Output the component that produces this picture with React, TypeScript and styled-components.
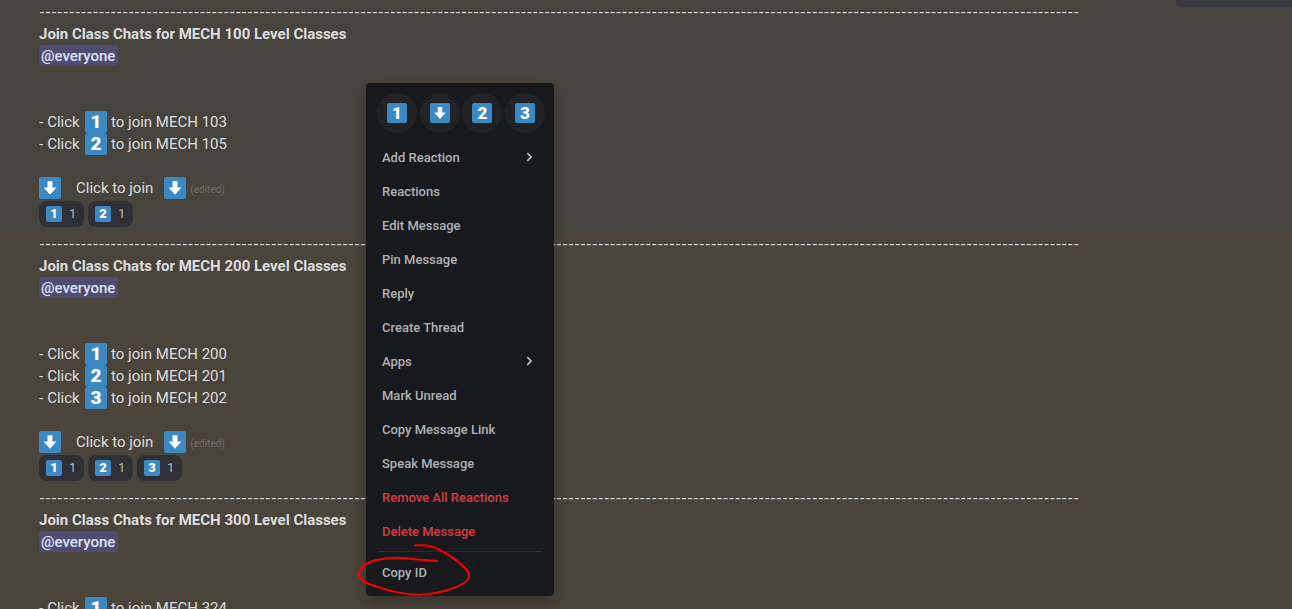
import React from 'react';
import styled, { createGlobalStyle } from 'styled-components';

type EmojiName = '1' | '2' | '3' | 'down';

const GlobalStyle = createGlobalStyle`
  *, *::before, *::after { box-sizing: border-box; }
  body {
    margin: 0;
    overflow: hidden;
    background: #4b443b;
    color: #dcddde;
    font-family: Roboto, "Liberation Sans", sans-serif;
    font-size: 15px;
    line-height: 22px;
  }
`;

const Page = styled.div`
  position: relative;
  height: 100vh;
  overflow: hidden;
`;

const Log = styled.main`
  margin-top: -1px;
`;

const Message = styled.article<{ $tinted?: boolean }>`
  padding: 2px 16px 2px 39px;
  background: ${(p) => (p.$tinted ? '#46443c' : '#4b443b')};
`;

const Rule = styled.div`
  height: 22px;
  overflow: hidden;
  font-family: Lato, sans-serif;
  font-size: 16px;
  line-height: 20px;
  white-space: nowrap;
`;

const Title = styled.h2`
  margin: 0;
  font-size: 15px;
  font-weight: 700;
  line-height: 22px;
`;

const MentionLine = styled.div`
  height: 22px;
  margin-bottom: 44px;
`;

const Mention = styled.span`
  display: inline-block;
  height: 21px;
  padding: 0 3px 0 2px;
  border-radius: 3px;
  background: #4e4c70;
  color: #dee0fc;
  font-weight: 500;
  line-height: 22px;
  vertical-align: top;
`;

const Line = styled.div`
  display: flex;
  height: 22px;
  white-space: nowrap;
`;

const Lead = styled.span`
  display: flex;
  gap: 4px;
  width: 46px;
`;

const Tail = styled.span`
  padding-left: 4px;
`;

const JoinLine = styled(Line)`
  margin-top: 22px;
`;

const JoinText = styled.span`
  padding: 0 11px 0 15px;
`;

const Edited = styled.span`
  padding: 2px 0 0 4px;
  color: #706d69;
  font-size: 10px;
`;

const EmojiTile = styled.span<{ $size: number }>`
  display: inline-flex;
  flex: none;
  align-items: center;
  justify-content: center;
  width: ${(p) => p.$size}px;
  height: ${(p) => p.$size}px;
  border-radius: 2px;
  background: #3b88c3;
  color: #fff;
  font-size: ${(p) => p.$size - 3}px;
  font-weight: 900;
  line-height: ${(p) => p.$size}px;
`;

const Reactions = styled.div`
  display: flex;
  gap: 4px;
  margin: 2px 0;
`;

const Reaction = styled.button`
  display: flex;
  align-items: center;
  gap: 7px;
  width: 45px;
  height: 26px;
  padding: 0 7px;
  border: 0;
  border-radius: 8px;
  background: #2f3036;
  color: #b4b7bb;
  font: 400 13px/26px Roboto, sans-serif;
`;

const CornerPanel = styled.div`
  position: absolute;
  top: 0;
  right: 0;
  width: 116px;
  height: 7px;
  border-radius: 0 0 0 5px;
  background: #373942;
`;

const Menu = styled.div`
  position: absolute;
  top: 83px;
  left: 366px;
  width: 188px;
  padding: 10px 8px 6px;
  border-radius: 4px;
  background: #18191c;
  box-shadow: 0 8px 16px rgba(0, 0, 0, 0.24);
`;

const QuickRow = styled.div`
  display: flex;
  justify-content: space-between;
  margin-bottom: 8px;
  padding: 0 1px 0 3px;
`;

const QuickButton = styled.button`
  display: flex;
  align-items: center;
  justify-content: center;
  width: 40px;
  height: 40px;
  padding: 0;
  border: 0;
  border-radius: 50%;
  background: #202225;
  font-family: inherit;
`;

const MenuItem = styled.button<{ $danger?: boolean }>`
  display: flex;
  align-items: center;
  justify-content: space-between;
  width: 100%;
  height: 32px;
  margin: 2px 0;
  padding: 2px 12px 0 8px;
  border: 0;
  border-radius: 2px;
  background: none;
  color: ${(p) => (p.$danger ? '#d63c40' : '#b0b2b5')};
  font: 500 13px/18px Roboto, sans-serif;
  text-align: left;
`;

const Separator = styled.hr`
  height: 1px;
  margin: 4px;
  border: 0;
  background: #2a2b2f;
`;

const Circled = styled.div`
  position: relative;
`;

const Scribble = styled.svg`
  position: absolute;
  top: -14px;
  left: -18px;
  pointer-events: none;
`;

function Emoji({ name, size }: { name: EmojiName; size: number }) {
  return (
    <EmojiTile $size={size}>
      {name === 'down' ? (
        <svg width={size} height={size} viewBox="0 0 36 36" aria-label="down arrow">
          <path d="M14 7h8v10h6.400L18 29 7.600 17H14z" fill="#fff" />
        </svg>
      ) : (
        name
      )}
    </EmojiTile>
  );
}

function Chevron() {
  return (
    <svg width="10" height="12" viewBox="0 0 10 12" fill="none" aria-hidden="true">
      <path d="M3.3 1.2 7.1 5 3.3 8.8" stroke="#b9bbbe" strokeWidth="1.7" />
    </svg>
  );
}

type Choice = { emoji: EmojiName; course: string };

const posts: { level: string; choices: Choice[] }[] = [
  {
    level: '100',
    choices: [
      { emoji: '1', course: '103' },
      { emoji: '2', course: '105' },
    ],
  },
  {
    level: '200',
    choices: [
      { emoji: '1', course: '200' },
      { emoji: '2', course: '201' },
      { emoji: '3', course: '202' },
    ],
  },
  { level: '300', choices: [{ emoji: '1', course: '324' }] },
];

const quick: EmojiName[] = ['1', 'down', '2', '3'];

const items: { label: string; submenu?: boolean; danger?: boolean }[] = [
  { label: 'Add Reaction', submenu: true },
  { label: 'Reactions' },
  { label: 'Edit Message' },
  { label: 'Pin Message' },
  { label: 'Reply' },
  { label: 'Create Thread' },
  { label: 'Apps', submenu: true },
  { label: 'Mark Unread' },
  { label: 'Copy Message Link' },
  { label: 'Speak Message' },
  { label: 'Remove All Reactions', danger: true },
  { label: 'Delete Message', danger: true },
];

export default function App() {
  return (
    <Page>
      <GlobalStyle />
      <Log>
        {posts.map(({ level, choices }, index) => (
          <Message key={level} $tinted={index === 0}>
            <Rule>{'-'.repeat(175)}</Rule>
            <Title>Join Class Chats for MECH {level} Level Classes</Title>
            <MentionLine>
              <Mention>@everyone</Mention>
            </MentionLine>
            {choices.map(({ emoji, course }) => (
              <Line key={course}>
                <Lead>
                  <span>-</span>
                  <span>Click</span>
                </Lead>
                <Emoji name={emoji} size={22} />
                <Tail>to join MECH {course}</Tail>
              </Line>
            ))}
            {level !== '300' && (
              <>
                <JoinLine>
                  <Emoji name="down" size={22} />
                  <JoinText>Click to join</JoinText>
                  <Emoji name="down" size={22} />
                  <Edited>(edited)</Edited>
                </JoinLine>
                <Reactions>
                  {choices.map(({ emoji }) => (
                    <Reaction key={emoji} type="button">
                      <Emoji name={emoji} size={16} />1
                    </Reaction>
                  ))}
                </Reactions>
              </>
            )}
          </Message>
        ))}
      </Log>
      <CornerPanel />
      <Menu role="menu">
        <QuickRow>
          {quick.map((name) => (
            <QuickButton key={name} type="button">
              <Emoji name={name} size={20} />
            </QuickButton>
          ))}
        </QuickRow>
        {items.map(({ label, submenu, danger }) => (
          <MenuItem key={label} type="button" role="menuitem" $danger={danger}>
            {label}
            {submenu && <Chevron />}
          </MenuItem>
        ))}
        <Separator />
        <Circled>
          <MenuItem type="button" role="menuitem">
            Copy ID
          </MenuItem>
          <Scribble width="118" height="58" viewBox="356 542 118 58" fill="none" aria-hidden="true">
            <path
              d="M415 545.5C424 544.5 431 545 438 549C446 553 457 560 465 568C471 574 470 579 464 583C454 589 438 594 423 594.6C402 595.5 385 589 370 584.5C361 581 358 577 359.5 572C362 565 370 561 380 559.5C390 557.5 405 557.5 417 559.5L437 561"
              stroke="#f80000"
              strokeWidth="2"
              strokeLinecap="round"
              strokeLinejoin="round"
            />
          </Scribble>
        </Circled>
      </Menu>
    </Page>
  );
}
